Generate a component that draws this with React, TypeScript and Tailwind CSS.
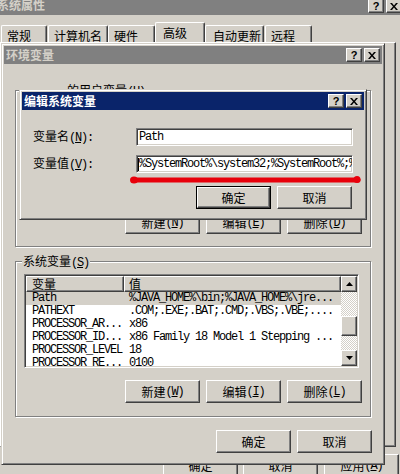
import React from "react";

const CJK = "font-['Noto_Sans_CJK_SC','Noto_Sans_CJK_JP',sans-serif]";
const MONO = "font-['Liberation_Mono','DejaVu_Sans_Mono',monospace] tracking-[-1.2px]";
const RAISED =
  "border border-t-white border-l-white border-r-[#404040] border-b-[#404040] shadow-[inset_-1px_-1px_0_#808080] bg-[#d4d0c8]";
const WIN =
  "border border-t-[#d4d0c8] border-l-[#d4d0c8] border-r-[#404040] border-b-[#404040] shadow-[inset_1px_1px_0_#fff,inset_-1px_-1px_0_#808080] p-[2px] bg-[#d4d0c8]";
const SUNKEN =
  "border border-t-[#808080] border-l-[#808080] border-r-white border-b-white shadow-[inset_1px_1px_0_#404040,inset_-1px_-1px_0_#d4d0c8] p-[1px]";
const GROUP = "border border-[#808080] shadow-[inset_1px_1px_0_#fff,1px_1px_0_#fff]";

function Paren({ k, colon }: { k: string; colon?: boolean }) {
  return (
    <span className={MONO}>
      (<span className="underline underline-offset-[1px]">{k}</span>){colon ? ":" : ""}
    </span>
  );
}

function CloseGlyph() {
  return (
    <svg width="8" height="7" viewBox="0 0 8 7">
      <path d="M0 0h2l2 2.4L6 0h2L5 3.5 8 7H6L4 4.6 2 7H0l3-3.5z" fill="#000" />
    </svg>
  );
}

function TitleBtns() {
  return (
    <div className="flex gap-[2px]">
      <div className={`${RAISED} w-[16px] h-[14px] flex items-center justify-center`}>
        <span className="font-['Liberation_Sans',sans-serif] font-bold text-[11px] leading-none text-black">?</span>
      </div>
      <div className={`${RAISED} w-[16px] h-[14px] flex items-center justify-center`}>
        <CloseGlyph />
      </div>
    </div>
  );
}

function TitleBar({ title, active }: { title: string; active?: boolean }) {
  return (
    <div
      className={`h-[18px] flex items-center justify-between pl-[2px] pr-[2px] ${
        active ? "bg-[#0a246a] text-white" : "bg-[#808080] text-[#d4d0c8]"
      }`}
    >
      <span className={`${CJK} font-bold text-[12px] leading-[14px]`}>{title}</span>
      <TitleBtns />
    </div>
  );
}

function Btn({ children, def }: { children: React.ReactNode; def?: boolean }) {
  if (def) {
    return (
      <div className="w-[75px] h-[23px] border border-black">
        <div className={`${RAISED} w-full h-full flex items-center justify-center ${CJK} text-[12px] leading-[14px] text-black`}>
          {children}
        </div>
      </div>
    );
  }
  return (
    <div className={`${RAISED} w-[75px] h-[23px] flex items-center justify-center ${CJK} text-[12px] leading-[14px] text-black`}>
      {children}
    </div>
  );
}

function Tab({ label, w, pl, sel }: { label: string; w: number; pl: number; sel?: boolean }) {
  return (
    <div
      style={{ width: w, paddingLeft: pl }}
      className={`${sel ? "h-[20px] pt-[3px]" : "h-[17px] pt-[3px]"} border-t border-l border-t-white border-l-white border-r border-r-[#404040] shadow-[inset_-1px_0_0_#808080] rounded-tl-[2px] rounded-tr-[2px] ${CJK} text-[12px] leading-[14px] text-black`}
    >
      {label}
    </div>
  );
}

function Arrow({ up }: { up?: boolean }) {
  return (
    <svg width="7" height="4" viewBox="0 0 7 4">
      <path d={up ? "M3.5 0L7 4H0z" : "M0 0h7L3.5 4z"} fill="#000" />
    </svg>
  );
}

const rows: [string, string][] = [
  ["Path", "%JAVA_HOME%\\bin;%JAVA_HOME%\\jre..."],
  ["PATHEXT", ".COM;.EXE;.BAT;.CMD;.VBS;.VBE;...."],
  ["PROCESSOR_AR...", "x86"],
  ["PROCESSOR_ID...", "x86 Family 18 Model 1 Stepping ..."],
  ["PROCESSOR_LEVEL", "18"],
  ["PROCESSOR_RE...", "0100"],
];

function ListView() {
  return (
    <div className={`${SUNKEN} w-[335px] h-[94px] bg-white`}>
      <div className="flex h-full overflow-hidden">
        <div className="w-[315px] flex flex-col overflow-hidden">
          <div className="flex h-[16px] shrink-0">
            <div className={`${RAISED} w-[98px] h-[16px] pl-[5px] ${CJK} text-[12px] leading-[14px] text-black`}>变量</div>
            <div className={`${RAISED} w-[217px] h-[16px] pl-[4px] ${CJK} text-[12px] leading-[14px] text-black`}>值</div>
          </div>
          {rows.map(([n, v], i) => (
            <div
              key={n}
              className={`flex h-[13px] shrink-0 ${i === 0 ? "bg-[#d4d0c8]" : ""} ${MONO} text-[12px] leading-[13px] text-black whitespace-nowrap`}
            >
              <div className="w-[98px] pl-[6px] overflow-hidden">{n}</div>
              <div className="w-[217px] pl-[5px] overflow-hidden">{v}</div>
            </div>
          ))}
        </div>
        <div className="w-[16px] flex flex-col">
          <div className={`${RAISED} w-[16px] h-[16px] shrink-0 flex items-center justify-center`}>
            <Arrow up />
          </div>
          <div className="flex-1 bg-[repeating-conic-gradient(#d4d0c8_0%_25%,#ffffff_0%_50%)] bg-[length:2px_2px]">
            <div className={`${RAISED} w-[16px] h-[20px] mt-[24px]`} />
          </div>
          <div className={`${RAISED} w-[16px] h-[16px] shrink-0 flex items-center justify-center`}>
            <Arrow />
          </div>
        </div>
      </div>
    </div>
  );
}

export default function App() {
  return (
    <div className={`relative w-[400px] h-[474px] overflow-hidden bg-[#d4d0c8] ${CJK}`}>
      {/* System properties window (background) */}
      <div className="w-[410px] flex flex-col">
        <div className="-mt-[3px] h-[18px] bg-[#808080] flex items-center justify-between pr-[8px]">
          <span className={`-ml-[3px] -mt-[3px] ${CJK} font-bold text-[12px] leading-[14px] text-[#d4d0c8]`}>系统属性</span>
          <TitleBtns />
        </div>
        <div className="h-[27px] flex items-end pl-[1px]">
          <Tab label="常规" w={46} pl={5} />
          <div className="w-[1px]" />
          <Tab label="计算机名" w={60} pl={5} />
          <Tab label="硬件" w={47} pl={5} />
          <Tab label="高级" w={50} pl={7} sel />
          <Tab label="自动更新" w={59} pl={7} />
          <div className="w-[1px]" />
          <Tab label="远程" w={47} pl={5} />
        </div>
        <div className="w-[396px] h-[405px] border border-t-white border-l-white border-r-[#404040] border-b-[#404040] shadow-[inset_-1px_-1px_0_#808080]" />
        <div className="flex pl-[163px] gap-[5px] mt-[7px]">
          <Btn>确定</Btn>
          <Btn>取消</Btn>
          <div className="ml-[1px]">
            <Btn>
              应用<Paren k="A" />
            </Btn>
          </div>
        </div>
      </div>

      {/* Environment variables window */}
      <div className={`absolute left-[1px] top-[43px] w-[384px] h-[422px] ${WIN} flex flex-col`}>
        <TitleBar title="环境变量" />
        <div className={`${GROUP} mt-[26px] ml-[11px] w-[356px] h-[157px] flex flex-col justify-between pb-[12px]`}>
          <div className={`-mt-[8px] ml-[50px] px-[1px] w-fit h-[14px] bg-[#d4d0c8] text-[12px] leading-[14px] text-black`}>
            的用户变量<Paren k="U" />
          </div>
          <div className="flex justify-end gap-[6px] pr-[8px]">
            <Btn>
              新建<Paren k="N" />
            </Btn>
            <Btn>
              编辑<Paren k="E" />
            </Btn>
            <Btn>
              删除<Paren k="D" />
            </Btn>
          </div>
        </div>
        <div className={`${GROUP} mt-[14px] ml-[11px] w-[356px] h-[156px] flex flex-col`}>
          <div className={`-mt-[8px] ml-[6px] px-[1px] w-fit h-[14px] bg-[#d4d0c8] text-[12px] leading-[14px] text-black`}>
            系统变量<Paren k="S" />
          </div>
          <div className="mt-[6px] ml-[8px]">
            <ListView />
          </div>
          <div className="mt-[12px] flex justify-end gap-[6px] pr-[8px]">
            <Btn>
              新建<Paren k="W" />
            </Btn>
            <Btn>
              编辑<Paren k="I" />
            </Btn>
            <Btn>
              删除<Paren k="L" />
            </Btn>
          </div>
        </div>
        <div className="mt-[13px] flex justify-end gap-[6px] pr-[10px]">
          <Btn>确定</Btn>
          <Btn>取消</Btn>
        </div>
      </div>

      {/* Edit system variable dialog */}
      <div className={`absolute left-[19px] top-[89px] w-[348px] h-[131px] ${WIN} flex flex-col`}>
        <TitleBar title="编辑系统变量" active />
        <div className="mt-[18px] flex items-center">
          <div className="w-[114px] pl-[11px] text-[12px] leading-[14px] text-black">
            变量名<Paren k="N" colon />
          </div>
          <div className={`${SUNKEN} w-[217px] h-[18px] bg-white`}>
            <div className={`${MONO} text-[12px] leading-[14px] text-black pl-[1px] whitespace-nowrap`}>Path</div>
          </div>
        </div>
        <div className="mt-[9px] flex items-center">
          <div className="w-[114px] pl-[11px] text-[12px] leading-[14px] text-black">
            变量值<Paren k="V" colon />
          </div>
          <div className={`${SUNKEN} w-[217px] h-[18px] bg-white overflow-hidden`}>
            <div className="flex items-center whitespace-nowrap">
              <div className="w-[1px] h-[13px] bg-black shrink-0" />
              <div className={`${MONO} text-[12px] leading-[14px] text-black`}>
                %SystemRoot%\system32;%SystemRoot%;%SystemRoot%\System32\Wbem
              </div>
            </div>
          </div>
        </div>
        <div className="mt-[13px] flex justify-end gap-[6px] pr-[12px]">
          <Btn def>确定</Btn>
          <Btn>取消</Btn>
        </div>
      </div>

      {/* Red annotation line */}
      <svg className="absolute left-[128px] top-[174px]" width="236" height="12" viewBox="0 0 236 12">
        <line x1="6" y1="6" x2="230" y2="6" stroke="#e8000b" strokeWidth="5" strokeLinecap="round" />
        <ellipse cx="6" cy="6" rx="4" ry="3.5" fill="#e8000b" />
        <ellipse cx="229" cy="5.5" rx="3.5" ry="3.5" fill="#e8000b" />
      </svg>
    </div>
  );
}
